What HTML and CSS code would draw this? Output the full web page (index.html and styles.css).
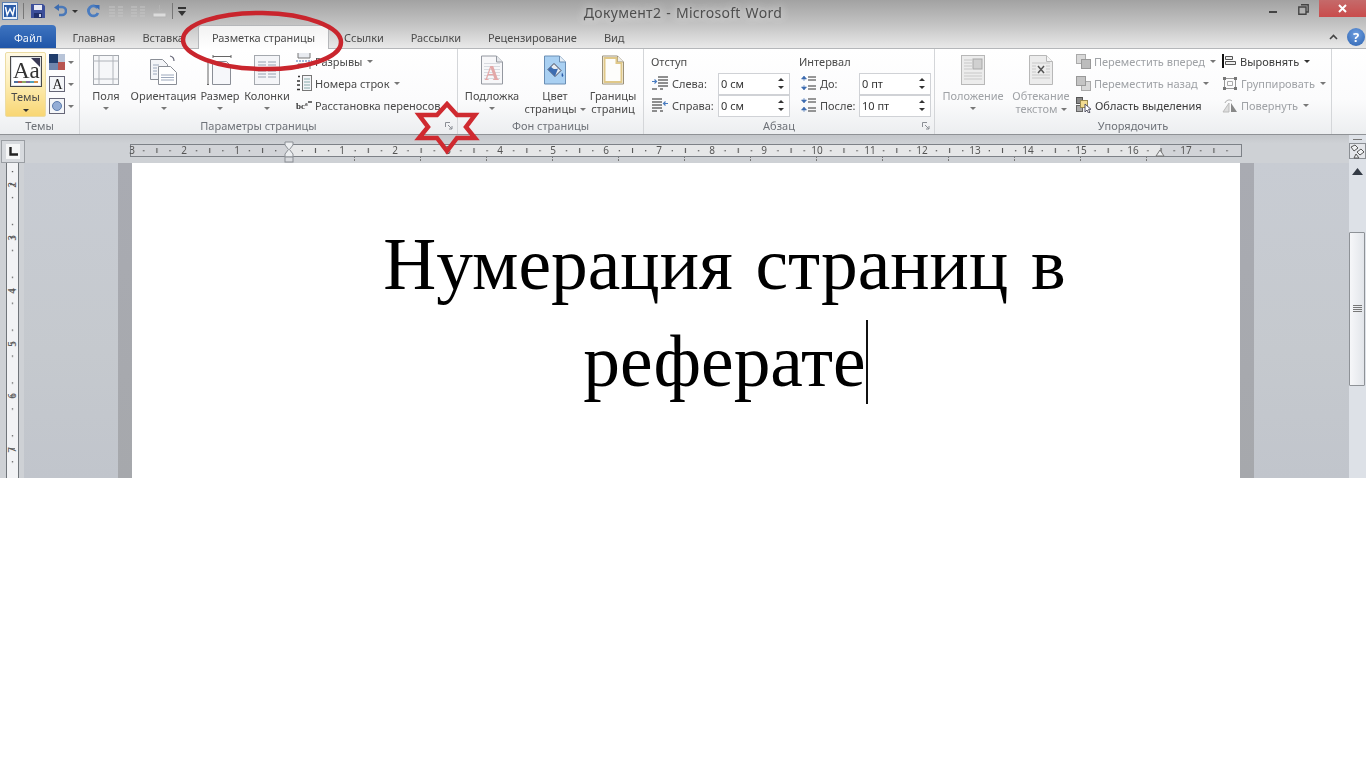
FILE: index.html
```html
<!DOCTYPE html>
<html lang="ru">
<head>
<meta charset="utf-8">
<title>Документ2 - Microsoft Word</title>
<link rel="stylesheet" href="styles.css">
</head>
<body>
<div class="window">
  <header class="titlebar">
    <div class="qat">
      <svg class="q-word" width="16" height="18" viewBox="0 0 16 18"><rect x=".5" y=".5" width="15" height="17" fill="#e8f0fa" stroke="#5a7fb0"/><rect x="2" y="3" width="12" height="12" fill="#2a5ca8"/><path d="M3.5 5l1.7 8 2.8-6 2.8 6 1.7-8" fill="none" stroke="#fff" stroke-width="1.5"/></svg>
      <i class="q-sep"></i>
      <svg class="q-save" width="14" height="14" viewBox="0 0 14 14"><path d="M0 0h12l2 2v12H0z" fill="#3c4f9a"/><rect x="3" y="1" width="8" height="5" fill="#e8eaf4"/><rect x="3" y="9" width="8" height="5" fill="#20306c"/><rect x="8" y="10" width="2" height="3" fill="#cdd3ea"/></svg>
      <svg class="q-undo" width="13" height="14" viewBox="0 0 13 14"><path d="M3 3h5a4 4 0 0 1 0 8H5" fill="none" stroke="#4a78b8" stroke-width="2.6"/><path d="M5 0v7L0 3.5z" fill="#3c6cb0"/></svg>
      <span class="caret dark q-c"></span>
      <svg class="q-redo" width="13" height="14" viewBox="0 0 13 14"><path d="M10.5 4A5 5 0 1 0 11 9" fill="none" stroke="#4a7cc0" stroke-width="2.8"/><path d="M7 1h5.500v5z" fill="#3a6cb4"/></svg>
      <svg class="q-dis" width="16" height="14" viewBox="0 0 16 14"><path d="M1 3h6M1 6h6M1 9h6M1 12h6M10 3h5M10 6h5M10 9h5M10 12h5" stroke="#c4c4c4"/></svg>
      <svg class="q-dis" width="16" height="14" viewBox="0 0 16 14"><path d="M1 3h6M1 6h6M1 9h6M1 12h6M10 3h5M10 6h5M10 9h5M10 12h5" stroke="#c4c4c4"/></svg>
      <svg class="q-dis" width="15" height="14" viewBox="0 0 15 14"><path d="M1 9h13v4H1z" fill="#dcdcdc" stroke="#b4b4b4"/><path d="M7.500 1v6M5 5l2.500 3L10 5" fill="none" stroke="#b4b4b4"/></svg>
      <i class="q-sep"></i>
      <svg class="q-more" width="8" height="9" viewBox="0 0 8 9"><path d="M0 0h8v2H0z" fill="#333"/><path d="M0 4h8L4 9z" fill="#333"/></svg>
    </div>
    <div class="doc-title">Документ2 - Microsoft Word</div>
    <div class="win-controls">
      <i class="w-min"></i>
      <svg class="w-max" width="11" height="11" viewBox="0 0 11 11"><path d="M3 .8h7.200v7.200H8M.8 3h7.200v7.200H.8z" fill="none" stroke="#444" stroke-width="1.400"/></svg>
      <div class="w-close"><svg width="9" height="9" viewBox="0 0 9 9"><path d="M1 1l7 7M8 1l-7 7" stroke="#fff" stroke-width="2"/></svg></div>
    </div>
  </header>

  <nav class="tabs">
    <div class="tab file">Файл</div>
    <div class="tab">Главная</div>
    <div class="tab">Вставка</div>
    <div class="tab active">Разметка страницы</div>
    <div class="tab after">Ссылки</div>
    <div class="tab">Рассылки</div>
    <div class="tab">Рецензирование</div>
    <div class="tab">Вид</div>
    <div class="tab-tools">
      <svg width="9" height="6" viewBox="0 0 9 6"><path d="M1 5l3.500-3.500L8 5" fill="none" stroke="#444" stroke-width="1.600"/></svg>
      <div class="help">?</div>
    </div>
  </nav>

  <section class="ribbon">
    <div class="group g-themes">
      <div class="group-body">
        <div class="theme-btn">
          <svg width="32" height="31" viewBox="0 0 32 31"><rect x=".5" y=".5" width="31" height="30" fill="#fff" stroke="#4a4a4a"/><rect x="1.500" y="1.500" width="29" height="28" fill="none" stroke="#dfe2e6"/><path d="M21 2h9v9z" fill="#3a3a55"/><text x="3" y="22" class="aa">Aa</text><path d="M4 25h4v2H4z" fill="#4f6f9f"/><path d="M8 25h4v2H8z" fill="#b05a50"/><path d="M12 25h4v2h-4z" fill="#8fa860"/><path d="M16 25h4v2h-4z" fill="#7a6a9a"/><path d="M20 25h4v2h-4z" fill="#50a0b8"/><path d="M24 25h4v2h-4z" fill="#d89048"/></svg>
          <span class="btn-label">Темы</span>
          <span class="caret dark"></span>
        </div>
        <div class="theme-small">
          <div class="ts-row"><svg width="16" height="16" viewBox="0 0 16 16"><rect width="16" height="16" fill="#b8c4d8"/><rect width="9" height="9" fill="#1f3c6c"/><rect x="9" y="8" width="7" height="8" fill="#b85450"/><rect y="9" width="9" height="7" fill="#6f86ad"/></svg><span class="caret"></span></div>
          <div class="ts-row"><svg width="16" height="16" viewBox="0 0 16 16"><rect x=".5" y=".5" width="15" height="15" fill="#f4f6f9" stroke="#667"/><text x="3.500" y="13" class="ts-a">A</text></svg><span class="caret"></span></div>
          <div class="ts-row"><svg width="16" height="16" viewBox="0 0 16 16"><rect x=".5" y=".5" width="15" height="15" fill="#f4f6f9" stroke="#667"/><circle cx="8" cy="8" r="4.500" fill="#93add6" stroke="#5c7bac"/></svg><span class="caret"></span></div>
        </div>
      </div>
      <div class="group-label">Темы</div>
    </div>

    <div class="group g-page">
      <div class="group-body">
        <div class="big w-fields">
          <svg class="ico" width="26" height="30" viewBox="0 0 26 30"><rect x=".5" y=".5" width="25" height="29" fill="#f6f7f9" stroke="#a4a8ae"/><path d="M6 0v30M20 0v30M0 6h26M0 24h26" stroke="#b0b4ba"/></svg>
          <span class="btn-label">Поля</span><span class="caret"></span>
        </div>
        <div class="big w-orient">
          <svg class="ico" width="28" height="30" viewBox="0 0 28 30"><path d="M.5 4.500h12l5 5v15H.5z" fill="#f4f5f8" stroke="#8a8e96"/><path d="M8.500 11.500h12l6 6v12h-18z" fill="#fff" stroke="#8a8e96"/><path d="M11 20h13M11 22.500h13M11 25h13M3 10h6M3 13h4M3 16h4M3 19h4" stroke="#9ca8bc"/><path d="M20 1c3 .5 4 2 4 5" fill="none" stroke="#667" stroke-width="1.200"/></svg>
          <span class="btn-label">Ориентация</span><span class="caret"></span>
        </div>
        <div class="big w-size">
          <svg class="ico" width="26" height="30" viewBox="0 0 26 30"><path d="M6 1.500h18M6 0v3M24 0v3M1 6v24M0 6h2M0 29.500h2" stroke="#666" fill="none"/><path d="M5.500 6.500h14l4 4v19h-18z" fill="#f6f7fa" stroke="#8a8e96"/></svg>
          <span class="btn-label">Размер</span><span class="caret"></span>
        </div>
        <div class="big w-cols">
          <svg class="ico" width="26" height="30" viewBox="0 0 26 30"><rect x=".5" y=".5" width="25" height="29" fill="#f4f5f8" stroke="#a4a8ae"/><path d="M4 7h8M4 10h8M4 13h8M4 16h8M4 19h8M4 22h8M14 7h8M14 10h8M14 13h8M14 16h8M14 19h8M14 22h8" stroke="#98a2b2"/></svg>
          <span class="btn-label">Колонки</span><span class="caret"></span>
        </div>
        <div class="small-col c-breaks">
          <div class="s-row"><svg width="16" height="16" viewBox="0 0 16 16"><path d="M2 0v5h12V0" fill="#e8ebf0" stroke="#777"/><path d="M2 11v5M14 11v5M2 11h12" fill="none" stroke="#777"/><path d="M0 8h16" stroke="#4a78b8" stroke-dasharray="2 1"/></svg><span>Разрывы</span><span class="caret"></span></div>
          <div class="s-row"><svg width="16" height="16" viewBox="0 0 16 16"><rect x="6.500" y=".5" width="9" height="15" fill="#f4f5f8" stroke="#777"/><path d="M8 4h6M8 7h6M8 10h6M8 13h6" stroke="#8aa"/><path d="M2 1.500h2M1 6h3M1 10h3M1 14.500h3" stroke="#333" stroke-width="1.500"/></svg><span>Номера строк</span><span class="caret"></span></div>
          <div class="s-row"><svg width="16" height="16" viewBox="0 0 16 16"><text x="0" y="12" class="hy">bcª</text><path d="M12 5h4" stroke="#333" stroke-width="1.400"/></svg><span>Расстановка переносов</span></div>
        </div>
      </div>
      <div class="group-label lab-shift">Параметры страницы</div>
      <svg class="launcher l-page" width="8" height="8" viewBox="0 0 8 8"><path d="M.5 5V.5H5M3 3l4 4M7 4v3H4" fill="none" stroke="#8a8e94"/></svg>
    </div>

    <div class="group g-bg">
      <div class="group-body">
        <div class="big w-wm">
          <svg class="ico" width="22" height="29" viewBox="0 0 22 29"><path d="M.5.5h15l6 6v22H.5z" fill="#f7f7f9" stroke="#9498a0"/><path d="M15.500.5v6h6" fill="#e6e8ec" stroke="#9498a0"/><path d="M3 8h16M3 11h16M3 14h16M3 17h16M3 20h16M3 23h16" stroke="#d8dae0"/><text x="3.500" y="24" class="wm">A</text></svg>
          <span class="btn-label">Подложка</span><span class="caret"></span>
        </div>
        <div class="big w-color">
          <svg class="ico" width="22" height="29" viewBox="0 0 22 29"><path d="M.5.5h15l6 6v22H.5z" fill="#a9d0f2" stroke="#6a8eb4"/><path d="M15.500.5v6h6" fill="#e6eef6" stroke="#6a8eb4"/><path d="M10 8l7 7-6 6-7-7z" fill="#e6ecf2" stroke="#445"/><path d="M7 11c2 3 4 3 7 2l-3 8-7-7z" fill="#3c6cb0"/><path d="M18 17c1 2 2 3 1 4s-2 0-1-4z" fill="#2c5ca8"/></svg>
          <span class="btn-label two">Цвет<br>страницы<span class="caret inline"></span></span>
        </div>
        <div class="big w-border">
          <svg class="ico" width="22" height="29" viewBox="0 0 22 29"><path d="M.5.5h15l6 6v22H.5z" fill="#fff" stroke="#9a9078"/><path d="M15.500.5v6h6" fill="#f0eee6" stroke="#9a9078"/><path d="M2.500 2.500h12v5h5v19h-17z" fill="#fdfdfb" stroke="#e0c888" stroke-width="2"/></svg>
          <span class="btn-label two">Границы<br>страниц</span>
        </div>
      </div>
      <div class="group-label">Фон страницы</div>
    </div>

    <div class="group g-para">
      <div class="group-body para-body">
        <div class="para-col c-indent">
          <div class="para-head">Отступ</div>
          <div class="para-row">
            <svg class="p-ico" width="16" height="14" viewBox="0 0 16 14"><path d="M6 1h10M6 4h10M6 7h10M6 10h10M0 13h5M8 13h3" stroke="#222"/><path d="M0 5.500h4M2.500 3.500l2 2-2 2" fill="none" stroke="#4a7cc0" stroke-width="1.200"/></svg>
            <span class="p-lab">Слева:</span>
            <div class="spin"><span>0 см</span><span class="arrows"><i class="up"></i><i class="down"></i></span></div>
          </div>
          <div class="para-row">
            <svg class="p-ico" width="16" height="14" viewBox="0 0 16 14"><path d="M0 1h10M0 4h10M0 7h10M0 10h10M0 13h5M8 13h3" stroke="#222"/><path d="M16 5.500h-4M13.500 3.500l-2 2 2 2" fill="none" stroke="#4a7cc0" stroke-width="1.200"/></svg>
            <span class="p-lab">Справа:</span>
            <div class="spin"><span>0 см</span><span class="arrows"><i class="up"></i><i class="down"></i></span></div>
          </div>
        </div>
        <div class="para-col c-space">
          <div class="para-head">Интервал</div>
          <div class="para-row">
            <svg class="p-ico" width="15" height="16" viewBox="0 0 15 16"><path d="M7 2h8M7 5h8M7 11h8M7 14h8" stroke="#333"/><path d="M3 1l2.500 3h-5zM3 15L.5 12h5zM3 4v2M3 10v2" fill="#3c6cb0" stroke="#3c6cb0" stroke-width=".6"/></svg>
            <span class="p-lab">До:</span>
            <div class="spin"><span>0 пт</span><span class="arrows"><i class="up"></i><i class="down"></i></span></div>
          </div>
          <div class="para-row">
            <svg class="p-ico" width="15" height="16" viewBox="0 0 15 16"><path d="M7 2h8M7 5h8M7 11h8M7 14h8" stroke="#333"/><path d="M3 6L.5 3h5zM3 10l2.500 3h-5zM3 1v2M3 13v2" fill="#3c6cb0" stroke="#3c6cb0" stroke-width=".6"/></svg>
            <span class="p-lab">После:</span>
            <div class="spin"><span>10 пт</span><span class="arrows"><i class="up"></i><i class="down"></i></span></div>
          </div>
        </div>
      </div>
      <div class="group-label lab-shift">Абзац</div>
      <svg class="launcher l-para" width="8" height="8" viewBox="0 0 8 8"><path d="M.5 5V.5H5M3 3l4 4M7 4v3H4" fill="none" stroke="#8a8e94"/></svg>
    </div>

    <div class="group g-arrange">
      <div class="group-body">
        <div class="big w-pos off">
          <svg class="ico" width="24" height="30" viewBox="0 0 24 30"><rect x=".5" y=".5" width="23" height="29" fill="#ececec" stroke="#b8b8b8"/><path d="M3 5h8M3 8h8M3 11h8M3 14h8M3 18h18M3 21h18M3 24h18" stroke="#c8c8c8"/><rect x="12" y="4" width="9" height="10" fill="#d0d0d0" stroke="#a8a8a8"/></svg>
          <span class="btn-label">Положение</span><span class="caret"></span>
        </div>
        <div class="big w-wrap off">
          <svg class="ico" width="24" height="30" viewBox="0 0 24 30"><path d="M.5.5h17l6 6v23H.5z" fill="#ececec" stroke="#b8b8b8"/><path d="M17.500.5v6h6" fill="#f6f6f6" stroke="#b8b8b8"/><path d="M3 8h18M3 11h4M17 11h4M3 14h4M17 14h4M3 17h4M17 17h4M3 20h18M3 23h18" stroke="#c8c8c8"/><path d="M9 11l6 7M15 11l-6 7" stroke="#555" stroke-width="1.500"/></svg>
          <span class="btn-label two">Обтекание<br>текстом<span class="caret inline"></span></span>
        </div>
        <div class="small-col c-order">
          <div class="s-row off"><svg width="15" height="15" viewBox="0 0 15 15"><rect x=".5" y=".5" width="9" height="9" fill="#d8d8d8" stroke="#aaa"/><rect x="5.500" y="5.500" width="9" height="9" fill="#bcbcbc" stroke="#999"/></svg><span>Переместить вперед</span><span class="caret"></span></div>
          <div class="s-row off"><svg width="15" height="15" viewBox="0 0 15 15"><rect x="5.500" y="5.500" width="9" height="9" fill="#d8d8d8" stroke="#aaa"/><rect x=".5" y=".5" width="9" height="9" fill="#c4c4c4" stroke="#999"/></svg><span>Переместить назад</span><span class="caret"></span></div>
          <div class="s-row strong"><svg width="16" height="16" viewBox="0 0 16 16"><rect x=".5" y=".5" width="6" height="6" fill="#888" stroke="#555"/><rect x=".5" y="8.500" width="6" height="6" fill="#aaa" stroke="#666"/><rect x="4.500" y="3.500" width="7" height="7" fill="#f2dc90" stroke="#9a8a50"/><path d="M9 7v8l2-2 1.500 3 1.500-.7-1.500-3h2.500z" fill="#fff" stroke="#556"/></svg><span>Область выделения</span></div>
        </div>
        <div class="small-col c-align">
          <div class="s-row strong"><svg width="15" height="15" viewBox="0 0 15 15"><path d="M1 0v14" stroke="#111" stroke-width="2"/><path d="M3.500 2.500h7v3h-7zM3.500 7.500h10v3h-10z" fill="#eee" stroke="#555"/></svg><span>Выровнять</span><span class="caret dark"></span></div>
          <div class="s-row off"><svg width="16" height="15" viewBox="0 0 16 15"><path d="M2.500 2.500h11v10h-11z" fill="none" stroke="#999"/><path d="M5.500 5.500h5v4h-5z" fill="none" stroke="#aaa"/><path d="M1 1h3v3H1zM12 1h3v3h-3zM1 11h3v3H1zM12 11h3v3h-3z" fill="#777"/></svg><span>Группировать</span><span class="caret"></span></div>
          <div class="s-row off"><svg width="16" height="15" viewBox="0 0 16 15"><path d="M1 14l6-9v9z" fill="#ddd" stroke="#bbb"/><path d="M9 14V5l6 9z" fill="#888"/><path d="M3 5c1-3 5-4 7-2" fill="none" stroke="#aaa"/></svg><span>Повернуть</span><span class="caret"></span></div>
        </div>
      </div>
      <div class="group-label">Упорядочить</div>
    </div>
  </section>

  <section class="ruler-row">
    <div class="tab-select"><div class="tab-inner"><svg width="9" height="9" viewBox="0 0 9 9"><path d="M1.500 0v7.500H9" fill="none" stroke="#222" stroke-width="2.400"/></svg></div></div>
    <svg class="h-ruler" width="1112" height="22" viewBox="0 0 1112 22">
      <defs>
        <pattern id="hdots" x="159" y="0" width="52.85" height="13" patternUnits="userSpaceOnUse">
          <rect x="12.700" y="6" width="1.200" height="1.400" fill="#555"/>
          <rect x="25.900" y="4" width="1.100" height="5" fill="#555"/>
          <rect x="39" y="6" width="1.200" height="1.400" fill="#555"/>
        </pattern>
        <pattern id="hstops" x="158" y="0" width="66" height="5" patternUnits="userSpaceOnUse">
          <rect x="0" y="0" width="1" height="4" fill="#777"/>
        </pattern>
      </defs>
      <rect x=".5" y=".5" width="1111" height="12" class="r-gray"/>
      <rect x="159" y="1" width="871" height="11" fill="#e6e7e8"/>
      <rect x=".5" y=".5" width="1111" height="12" fill="url(#hdots)" stroke="#7d8187"/>
      <rect x="159" y="13" width="871" height="4" fill="url(#hstops)"/>
      <g class="r-num">
        <text x="2" y="10">3</text><text x="54" y="10">2</text><text x="107" y="10">1</text>
        <text x="212" y="10">1</text><text x="265" y="10">2</text><text x="318" y="10">3</text><text x="370" y="10">4</text><text x="423" y="10">5</text><text x="476" y="10">6</text><text x="529" y="10">7</text><text x="582" y="10">8</text><text x="634" y="10">9</text><text x="687" y="10">10</text><text x="740" y="10">11</text><text x="792" y="10">12</text><text x="845" y="10">13</text><text x="898" y="10">14</text><text x="951" y="10">15</text><text x="1003" y="10">16</text><text x="1056" y="10">17</text>
      </g>
      <path d="M155 -2h8v3l-3.500 4.500L163 10v3h-8v-3l3.500-4.500L155 1z" fill="#eceef0" stroke="#8a8e94"/>
      <rect x="155" y="13" width="8" height="5" fill="#d8dade" stroke="#8a8e94"/>
      <path d="M1026 12l4-6 4 6z" fill="#eceef0" stroke="#777"/>
    </svg>
    <div class="split-box">
      <i class="split-bar"></i>
      <div class="view-ruler"><svg width="15" height="15" viewBox="0 0 15 15"><path d="M1 3l4-2 3 3-4 3zM7 8l4-3 3 3-4 3zM6 10l3 4h-5z" fill="#f0f2f4" stroke="#555"/></svg></div>
    </div>
  </section>

  <section class="workspace">
    <div class="v-ruler">
      <svg width="13" height="316" viewBox="0 0 13 316">
        <defs>
          <pattern id="vdots" x="0" y="-5" width="13" height="52.85" patternUnits="userSpaceOnUse">
            <rect x="5.800" y="13" width="1.400" height="1.200" fill="#555"/>
            <rect x="4" y="26" width="5" height="1.100" fill="#555"/>
            <rect x="5.800" y="39" width="1.400" height="1.200" fill="#555"/>
          </pattern>
        </defs>
        <rect x=".5" y="-1" width="12" height="318" class="v-fill"/>
        <rect x=".5" y="-1" width="12" height="318" fill="url(#vdots)"/>
        <g class="r-num v-num">
          <text transform="translate(10 22) rotate(-90)">2</text>
          <text transform="translate(10 75) rotate(-90)">3</text>
          <text transform="translate(10 128) rotate(-90)">4</text>
          <text transform="translate(10 181) rotate(-90)">5</text>
          <text transform="translate(10 233) rotate(-90)">6</text>
          <text transform="translate(10 287) rotate(-90)">7</text>
        </g>
      </svg>
    </div>
    <div class="desk">
      <div class="page-shadow"></div>
      <article class="page">
        <div class="doc-text">
          <p>Нумерация страниц в</p>
          <p>реферате<span class="cursor"></span></p>
        </div>
      </article>
      <div class="page-shadow"></div>
    </div>
    <aside class="scrollbar">
      <svg class="sb-up" width="11" height="7" viewBox="0 0 11 7"><path d="M5.500 0L11 7H0z" fill="#333a44"/></svg>
      <div class="sb-thumb"><svg width="9" height="8" viewBox="0 0 9 8"><path d="M0 .5h9M0 2.500h9M0 4.500h9M0 6.500h9" stroke="#777"/></svg></div>
    </aside>
  </section>

  <svg class="marks" width="1366" height="478" viewBox="0 0 1366 478">
    <ellipse cx="262" cy="41" rx="79" ry="28" fill="none" stroke="#c9252d" stroke-width="4.500" transform="rotate(1 262 41)"/>
    <polygon points="447,104 457,115 475,115 466,127 475,138 457,138 447,151 437,138 419,138 428,127 419,115 437,115" fill="none" stroke="#cf2a30" stroke-width="4.500"/>
  </svg>
</div>
</body>
</html>
```

FILE: styles.css
```css
* { box-sizing: border-box; }
html, body { margin: 0; padding: 0; background: #fff; }
body { font-family: "Noto Sans", "Open Sans", sans-serif; font-size: 11px; color: #4a4a4a; }

.window { position: relative; width: 1366px; height: 478px; overflow: hidden; display: flex; flex-direction: column; }
.titlebar, .tabs, .ribbon, .ruler-row { filter: blur(.3px); }

/* title bar */
.titlebar { height: 25px; display: grid; grid-template-columns: 1fr auto 1fr; align-items: start; background: linear-gradient(#a2a2a2, #c4c4c4); }
.qat { display: flex; align-items: center; height: 22px; padding-left: 2px; }
.qat svg { flex: none; }
.q-sep { width: 1px; height: 16px; background: #777; margin-left: 5px; }
.q-save { margin-left: 7px; }
.q-undo { margin-left: 9px; }
.q-c { margin-left: 5px; }
.q-redo { margin-left: 9px; }
.q-dis { margin-left: 8px; }
.q-dis + .q-dis { margin-left: 6px; }
.q-more { margin-left: 5px; }
.doc-title { font-size: 14px; line-height: 26px; letter-spacing: .3px; word-spacing: 1px; color: #4e4e4e; text-shadow: 0 0 8px rgba(255, 255, 255, .75), 0 0 14px rgba(255, 255, 255, .5); }
.win-controls { display: flex; justify-content: flex-end; align-items: flex-start; }
.w-min { width: 8px; height: 2px; background: #444; margin-top: 11px; margin-right: 21px; }
.w-max { margin-top: 4px; margin-right: 10px; }
.w-close { width: 47px; height: 17px; background: linear-gradient(#c56a6a, #c94c4c); display: flex; align-items: center; justify-content: center; }

/* tabs */
.tabs { height: 24px; display: flex; align-items: stretch; background: linear-gradient(#c4c4c4, #e9e9e9); border-bottom: 1px solid #b5b7ba; position: relative; }
.tab { padding: 0 13.500px; line-height: 25px; color: #4c4c4c; letter-spacing: -.05px; white-space: nowrap; }
.tab.file { width: 56px; padding: 0; margin-right: 3px; text-align: center; color: #eef3fa; border-radius: 4px 4px 0 0; background: linear-gradient(#3e74c0, #1f55a8); }
.tab.active { padding: 0 13px; margin-left: .6px; background: linear-gradient(#f2f2f2, #fff); border: 1px solid #b5b7ba; border-bottom: 0; border-radius: 3px 3px 0 0; height: 24px; line-height: 23px; }
.tab.after { padding-left: 15px; }
.tab-tools { margin-left: auto; display: flex; align-items: center; gap: 9px; padding-right: 1px; }
.help { width: 18px; height: 18px; border-radius: 50%; background: radial-gradient(circle at 50% 35%, #6f9fe0, #2c62b0); color: #fff; font-weight: 700; font-size: 13px; line-height: 18px; text-align: center; }

/* ribbon */
.ribbon { height: 86px; display: flex; background: linear-gradient(#fff 0%, #fbfbfc 60%, #eceef0 100%); border-bottom: 1px solid #8f9296; }
.group { position: relative; display: flex; flex-direction: column; border-right: 1px solid #d4d6d9; flex: none; }
.g-themes { width: 80px; }
.g-page { width: 378px; }
.g-bg { width: 186px; }
.g-para { width: 291px; }
.g-arrange { width: 397px; }
.group-body { flex: 1; display: flex; align-items: flex-start; min-height: 0; }
.group-label { height: 16px; line-height: 15px; text-align: center; color: #6e7278; }
.lab-shift { padding-right: 20px; }
.launcher { position: absolute; bottom: 4px; }
.l-page { right: 4px; }
.l-para { right: 4px; }

.caret { display: inline-block; width: 0; height: 0; border-left: 3px solid transparent; border-right: 3px solid transparent; border-top: 3px solid #777; flex: none; }
.caret.dark { border-top-color: #333; }
.caret.inline { margin-left: 3px; vertical-align: 2px; }

.big { display: flex; flex-direction: column; align-items: center; padding-top: 6px; flex: none; white-space: nowrap; }
.ico { height: 30px; flex: none; }
.btn-label { margin-top: 4px; line-height: 13px; }
.big > .caret { margin-top: 5px; }

.theme-btn { width: 41px; height: 65px; margin: 3px 0 0 5px; padding-top: 3px; display: flex; flex-direction: column; align-items: center; background: linear-gradient(#fff9e4, #fdeeb8 45%, #f8d674); border: 1px solid #ecdca4; border-radius: 2px; flex: none; }
.theme-btn .btn-label { margin-top: 3px; }
.theme-btn .caret { margin-top: 6px; }
.aa { font-family: "Liberation Serif", serif; font-size: 23px; fill: #333; }
.theme-small { display: flex; flex-direction: column; gap: 6px; padding: 5px 0 0 3px; }
.ts-row { display: flex; align-items: center; gap: 3px; height: 16px; }
.ts-a { font-family: "Liberation Serif", serif; font-size: 14px; fill: #222; }
.wm { font-family: "Liberation Serif", serif; font-size: 20px; font-weight: 700; fill: #e3a8a8; }

.w-fields { width: 50px; margin-left: 1px; }
.w-orient { width: 65px; }
.w-size { width: 40px; margin-left: 4px; }
.w-cols { width: 46px; margin-left: 4px; }
.small-col { display: flex; flex-direction: column; flex: none; padding-top: 1px; }
.s-row { display: flex; align-items: center; height: 22px; white-space: nowrap; }
.s-row svg { flex: none; margin-right: 3px; }
.s-row .caret { margin-left: 5px; }
.c-breaks { margin-left: 6px; }
.hy { font-family: "Liberation Serif", serif; font-size: 9px; fill: #333; font-weight: 700; }

.w-wm { width: 62px; margin-left: 3px; }
.w-color { width: 64px; }
.w-border { width: 52px; }

.para-body { padding-left: 7px; }
.para-col { flex: none; display: flex; flex-direction: column; }
.c-indent { width: 148px; }
.c-space { width: 134px; }
.para-head { height: 23px; line-height: 26px; }
.para-row { height: 22px; display: flex; align-items: center; }
.p-ico { margin-left: 1px; flex: none; }
.p-lab { margin-left: 4px; flex: 1; }
.c-space .p-ico { margin-left: 2px; }
.spin { width: 72px; height: 22px; margin-right: 9px; display: flex; align-items: center; justify-content: space-between; padding: 0 5px 0 2px; background: #fff; border: 1px solid #d0d2d6; margin-bottom: -1px; color: #333; }
.c-space .spin { margin-right: 2px; }
.arrows { display: flex; flex-direction: column; gap: 5px; }
.arrows i { display: block; width: 0; height: 0; border-left: 3px solid transparent; border-right: 3px solid transparent; }
.arrows .up { border-bottom: 3px solid #333; }
.arrows .down { border-top: 3px solid #333; }

.off { color: #9fa2a6; }
.w-pos { width: 68px; margin-left: 4px; }
.w-wrap { width: 66px; margin-left: 1px; }
.btn-label.two { text-align: center; }
.c-order { margin-left: 2px; width: 146px; }
.c-align { width: 112px; }
.strong { color: #3a3a3a; }

/* ruler row */
.ruler-row { height: 28px; display: flex; background: linear-gradient(#c3c6ca, #ced1d5 30%); position: relative; }
.tab-select { width: 24px; height: 23px; margin: 5px 0 0 1px; padding: 3px 4px; border: 1px solid #9a9ea3; background: #d7dade; flex: none; }
.tab-inner { width: 14px; height: 15px; background: #f5f6f7; display: flex; align-items: center; justify-content: center; }
.h-ruler { margin: 9px 0 0 105px; flex: none; overflow: visible; }
.r-gray { fill: #d2d4d8; }
.r-num text { font-family: "Noto Sans", sans-serif; font-size: 10px; fill: #555; text-anchor: middle; }
.split-box { margin-left: auto; width: 17px; position: relative; background: #dde1e7; display: flex; flex-direction: column; align-items: center; }
.split-bar { width: 9px; height: 1px; background: #777; margin-top: 4px; margin-bottom: 3px; }
.view-ruler { width: 17px; height: 16px; background: #e4e6ea; border: 1px solid #8b8f94; display: flex; align-items: center; justify-content: center; }

/* workspace */
.workspace { flex: 1; display: flex; min-height: 0; background: linear-gradient(#c8ccd3, #c5c9ce 60%, #c1c5cc); }
.v-ruler { width: 24px; padding-left: 6px; flex: none; background: #ced1d5; height: 316px; }
.v-ruler svg { display: block; overflow: hidden; }
.v-fill { fill: #f2f3f5; stroke: #70757a; }
.desk { width: 1230px; padding-left: 94px; display: flex; flex: none; }
.page-shadow { width: 14px; background: linear-gradient(#a9abb2, #a6a8ac); flex: none; }
.page { width: 1108px; background: #fff; flex: none; padding: 53px 80px 0 157px; overflow: hidden; }
.doc-text { font-family: "Liberation Serif", "Times New Roman", serif; font-size: 73.400px; word-spacing: 4.500px; line-height: 97px; color: #000; text-align: center; }
.doc-text p { margin: 0; }
.cursor { display: inline-block; width: 2px; height: 84px; background: #111; vertical-align: -18px; margin-right: -2px; }
.scrollbar { margin-left: auto; width: 17px; flex: none; background: #dde1e7; position: relative; display: flex; flex-direction: column; align-items: center; }
.sb-up { margin-top: 5px; }
.sb-thumb { width: 16px; height: 154px; margin-top: 57px; background: linear-gradient(90deg, #f6f7f9, #e2e5ea); border: 1px solid #8e9297; border-radius: 1px; display: flex; align-items: center; justify-content: center; margin-left: -1px; }

.marks { position: absolute; left: 0; top: 0; pointer-events: none; }
```
